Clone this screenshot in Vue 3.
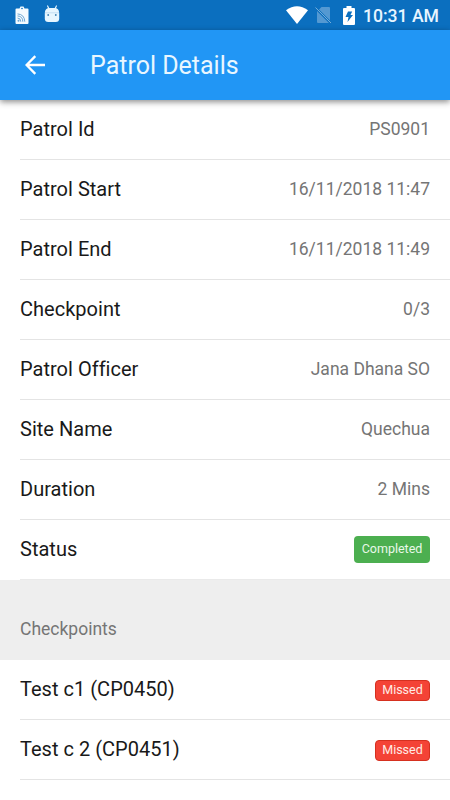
<script setup>
import { ref } from 'vue'

const details = ref([
    { label: 'Patrol Id', value: 'PS0901' },
    { label: 'Patrol Start', value: '16/11/2018 11:47' },
    { label: 'Patrol End', value: '16/11/2018 11:49' },
    { label: 'Checkpoint', value: '0/3' },
    { label: 'Patrol Officer', value: 'Jana Dhana SO' },
    { label: 'Site Name', value: 'Quechua' },
    { label: 'Duration', value: '2 Mins' },
    { label: 'Status', badge: 'Completed' },
])

const checkpoints = ref([
    { name: 'Test c1 (CP0450)', status: 'Missed' },
    { name: 'Test c 2 (CP0451)', status: 'Missed' },
])
</script>

<template>
    <div class="screen">
        <div class="statusbar">
            <div class="notifications">
                <svg width="14" height="19" viewBox="0 0 14 19">
                    <path fill="#f4fbff" d="M1.500 2.500h3L5.500 .5h3l1 2h3q1 0 1 1V17q0 1-1 1h-11q-1 0-1-1V3.500q0-1 1-1z" />
                    <circle cx="7" cy="2.500" r=".8" fill="#0b6fbf" />
                    <circle cx="3.500" cy="14.800" r="1" fill="#6ba6d4" />
                    <path fill="none" stroke="#6ba6d4" stroke-width="1" d="M2.500 12q3.200 0 3.300 3.700M2.500 9.900q5.300.3 5.300 5.800M2.500 7.900q7 .4 7.300 7.800" />
                </svg>
                <svg width="16" height="18" viewBox="0 0 16 18">
                    <path fill="none" stroke="#e6f4fd" stroke-width="1.200" stroke-linecap="round" d="M3.600 1l1.500 3M12.400 1l-1.500 3" />
                    <path fill="#e6f6ff" d="M.8 8q.2-5 4.700-5h5q4.500 0 4.700 5v5.500q0 3.500-3.500 3.500H4.300Q.8 17 .8 13.500z" />
                    <path stroke="#b4d6ee" stroke-width=".7" d="M1 7.800h14" />
                    <circle cx="4.200" cy="10" r=".9" fill="#3d83b6" />
                    <circle cx="11.800" cy="10" r=".9" fill="#3d83b6" />
                </svg>
            </div>
            <div class="system">
                <svg class="wifi" width="22" height="18" viewBox="0 0 22 18">
                    <path fill="#fff" d="M0 4.300Q11-4 22 4.300L11 18z" />
                </svg>
                <svg class="sim" width="17" height="18" viewBox="0 0 17 18">
                    <path fill="#5499d2" d="M6.500 1H14q1 0 1 1v12.500L4 3.500zM2 5l12 12H3q-1 0-1-1z" />
                    <path stroke="#75add9" stroke-width="1" d="M.5 1.500l15.500 15.500" />
                </svg>
                <svg class="battery" width="12" height="19" viewBox="0 0 12 19">
                    <path fill="#fff" d="M3.500 0h5v2H11q1 0 1 1v15q0 1-1 1H1q-1 0-1-1V3q0-1 1-1h2.500z" />
                    <path fill="#0b6fbf" d="M5 5.500h4.200L7.500 9H10l-5.500 7 1-5H2.500z" />
                </svg>
                <span class="clock">10:31 AM</span>
            </div>
        </div>
        <header class="navbar">
            <svg class="back" width="20" height="20" viewBox="0 0 20 20">
                <path fill="none" stroke="#fff" stroke-width="2.300" d="M20 10H2M10.300 1.100L1.600 10l8.700 8.900" />
            </svg>
            <h1>Patrol Details</h1>
        </header>

        <ul class="list">
            <li v-for="item in details" :key="item.label">
                <div class="inner">
                    <span class="label">{{ item.label }}</span>
                    <span v-if="item.badge" class="badge completed">{{ item.badge }}</span>
                    <span v-else class="value">{{ item.value }}</span>
                </div>
            </li>
        </ul>
        <div class="divider">Checkpoints</div>
        <ul class="list">
            <li v-for="point in checkpoints" :key="point.name">
                <div class="inner">
                    <span class="label">{{ point.name }}</span>
                    <span class="badge missed">{{ point.status }}</span>
                </div>
            </li>
        </ul>
    </div>
</template>

<style>
body {
    margin: 0;
    background: #fff;
}
</style>

<style scoped>
.screen {
    height: 800px;
    overflow: hidden;
    background: #fff;
    font-family: Roboto, "Liberation Sans", sans-serif;
    font-variant-ligatures: none;
    color: #191919;
}

.statusbar {
    height: 30px;
    box-sizing: border-box;
    padding: 0 11px 0 15px;
    display: flex;
    align-items: center;
    justify-content: space-between;
    background: #0b6fbf;
}

.notifications {
    display: flex;
    align-items: center;
    gap: 15px;
}

.notifications svg + svg {
    margin-top: -2px;
}

.system {
    display: flex;
    align-items: center;
}

.sim {
    margin-left: 7px;
}

.battery {
    margin-left: 11px;
}

.clock {
    margin-left: 8px;
    font-size: 17.6px;
    font-weight: 500;
    line-height: 30px;
    color: #e8f5ff;
    padding-top: 2px;
}

.navbar {
    position: relative;
    height: 70px;
    box-sizing: border-box;
    padding-left: 25px;
    display: flex;
    align-items: center;
    background: #2196f5;
    box-shadow: 0 2px 6px rgba(0, 0, 0, 0.45);
}

.navbar h1 {
    margin: 0 0 0 45px;
    font-size: 25px;
    font-weight: 400;
    color: #e9f6ff;
}

.list {
    margin: 0;
    padding: 0;
    list-style: none;
}

.list li {
    padding-left: 20px;
}

.inner {
    height: 60px;
    box-sizing: border-box;
    padding-right: 20px;
    display: flex;
    align-items: center;
    justify-content: space-between;
    border-bottom: 1px solid #e4e4e4;
}

.label {
    font-size: 20px;
    letter-spacing: 0.02px;
    padding-bottom: 1px;
}

.value {
    font-size: 17.5px;
    color: #757575;
    padding-bottom: 2px;
}

.badge {
    box-sizing: border-box;
    text-align: center;
    border-radius: 4px;
    font-size: 12.5px;
}

.completed {
    width: 76px;
    height: 27px;
    line-height: 25px;
    background: #4caf50;
    color: #e9f8e9;
}

.missed {
    width: 55px;
    height: 21px;
    margin-top: 2px;
    line-height: 18px;
    border: 1px solid #d5301f;
    background: #f44336;
    color: #ffebe5;
}

.list:first-of-type li:last-child .inner {
    border-bottom-color: #eaeaea;
}

.divider {
    height: 80px;
    box-sizing: border-box;
    padding: 39px 20px 0;
    font-size: 17.5px;
    line-height: 21px;
    background: #eee;
    color: #757575;
}
</style>
